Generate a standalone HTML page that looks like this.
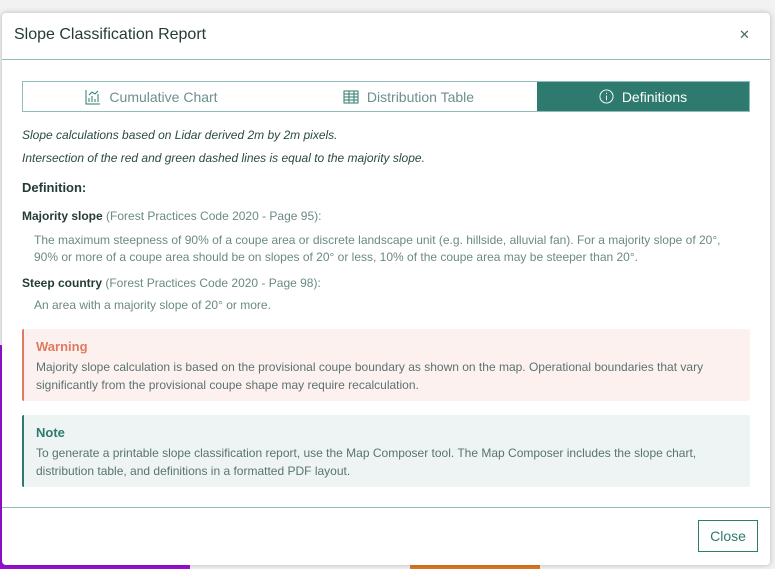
<!DOCTYPE html>
<html><head><meta charset="utf-8"><style>
*{box-sizing:border-box;margin:0;padding:0}
html,body{width:775px;height:569px;overflow:hidden}
body{background:#f2f2f2;font-family:"Liberation Sans",sans-serif;position:relative}
.bg1{position:absolute;left:0;top:345px;width:190px;height:224px;background:#9a0fd6}
.bg2{position:absolute;left:410px;top:556px;width:130px;height:20px;background:#e07a22;border-radius:8px}
.modal{position:absolute;left:2px;top:13px;width:768px;height:552px;background:#fff;border-radius:4px;box-shadow:0 0 6px rgba(0,0,0,.25)}
.hdr{height:47px;border-bottom:1px solid #8fbcbb;position:relative}
.hdr h1{position:absolute;left:12px;top:13px;font-size:16px;font-weight:normal;color:#253b38}
.x{position:absolute;left:737px;top:14px;font-size:13px;color:#4a6a66}
.tabs{position:absolute;left:20px;top:68px;width:728px;height:31px;border:1px solid #8fbcbb;display:flex}
.tab{flex:1;display:flex;align-items:center;justify-content:center;font-size:14px;color:#6d8f8a;gap:8px}
.tab.act{background:#2e7a6e;color:#fff;flex:0 0 212px}
.c{position:absolute;left:20px;color:#2b4a45;font-size:12px}
.i{font-style:italic}
.g{color:#6a8a85}
.lb{color:#253b38;font-weight:bold}
.box{position:absolute;left:20px;width:728px;height:72px;padding:9px 12px;font-size:12px;line-height:18px;color:#5a7370;border-radius:2px}
.box b{display:block;font-size:13px;margin-bottom:2px}
.w{top:316px;background:#fcf1ef;border-left:2px solid #e07a5f}
.w b{color:#e07a5f}
.n{top:402px;background:#eef4f3;border-left:2px solid #2e7a6e}
.n b{color:#2e7a6e}
.ftr{position:absolute;left:0;top:494px;width:768px;border-top:1px solid #8fbcbb}
.btn{position:absolute;left:696px;top:507px;width:60px;height:32px;border:1px solid #2e7a6e;color:#2e7a6e;font-size:14px;display:flex;align-items:center;justify-content:center}
</style></head><body>
<div class="bg1"></div><div class="bg2"></div>
<div class="modal">
<div class="hdr"><h1>Slope Classification Report</h1><span class="x">✕</span></div>
<div class="tabs">
<div class="tab"><svg width="16" height="16" viewBox="0 0 16 16" fill="none" stroke="#2e7a6e"><path d="M1 1v14h14M4 13v-4M7 13v-6M10 13v-3M13 13v-8M4 6l3-3 3 2 3-3"/></svg>Cumulative Chart</div>
<div class="tab"><svg width="16" height="14" viewBox="0 0 16 14" fill="none" stroke="#2e7a6e"><rect x="1" y="1" width="14" height="12"/><path d="M1 4h14M1 7h14M1 10h14M6 1v12M11 1v12"/></svg>Distribution Table</div>
<div class="tab act"><svg width="15" height="15" viewBox="0 0 16 16" fill="none" stroke="#fff"><circle cx="8" cy="8" r="7"/><path d="M8 7v5M8 4v1.5"/></svg>Definitions</div>
</div>
<div class="c i" style="top:115px">Slope calculations based on Lidar derived 2m by 2m pixels.</div>
<div class="c i" style="top:138px">Intersection of the red and green dashed lines is equal to the majority slope.</div>
<div class="c" style="top:167px;font-size:13px;font-weight:bold;color:#253b38">Definition:</div>
<div class="c" style="top:196px"><span class="lb">Majority slope</span> <span class="g">(Forest Practices Code 2020 - Page 95):</span></div>
<div class="c g" style="top:219px;left:32px;line-height:17px;width:704px">The maximum steepness of 90% of a coupe area or discrete landscape unit (e.g. hillside, alluvial fan). For a majority slope of 20°, 90% or more of a coupe area should be on slopes of 20° or less, 10% of the coupe area may be steeper than 20°.</div>
<div class="c" style="top:263px"><span class="lb">Steep country</span> <span class="g">(Forest Practices Code 2020 - Page 98):</span></div>
<div class="c g" style="top:285px;left:32px">An area with a majority slope of 20° or more.</div>
<div class="box w"><b>Warning</b>Majority slope calculation is based on the provisional coupe boundary as shown on the map. Operational boundaries that vary significantly from the provisional coupe shape may require recalculation.</div>
<div class="box n"><b>Note</b>To generate a printable slope classification report, use the Map Composer tool. The Map Composer includes the slope chart, distribution table, and definitions in a formatted PDF layout.</div>
<div class="ftr"></div>
<div class="btn">Close</div>
</div>
</body></html>
